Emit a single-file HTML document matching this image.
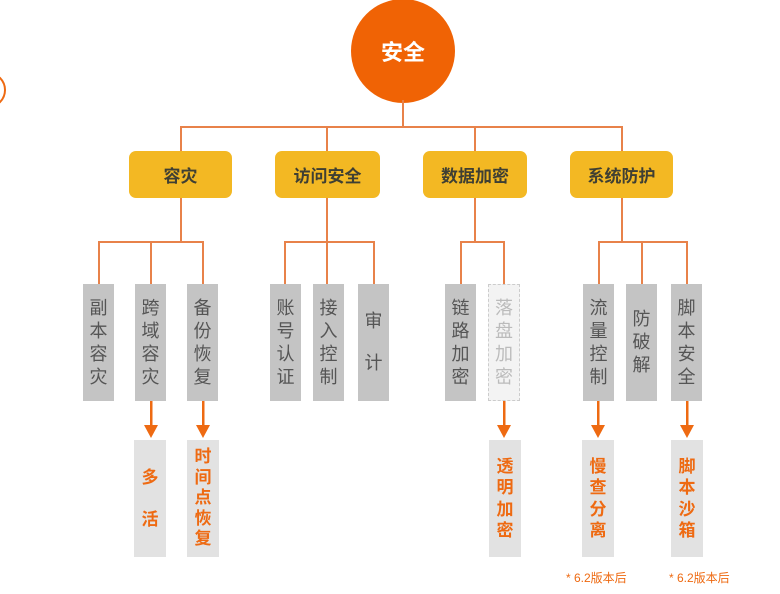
<!DOCTYPE html>
<html><head><meta charset="utf-8">
<style>
body{margin:0;width:780px;height:594px;background:#fff;position:relative;overflow:hidden;font-family:"Liberation Sans","Noto Sans CJK SC",sans-serif}
.a{position:absolute}
.ln{position:absolute;background:#e8824a}
.cat{position:absolute;top:151px;height:47px;background:#f3b823;border-radius:7px;color:#3f3f33;font-weight:bold;font-size:17px;display:flex;align-items:center;justify-content:center}
.g{position:absolute;top:284px;height:117px;background:#c4c4c4;color:#555;font-size:18px;line-height:23px;display:flex;align-items:center;justify-content:center;text-align:center;width:31px}
.o{position:absolute;top:440px;height:117px;background:#e2e2e2;color:#ee6a12;font-weight:bold;font-size:17px;line-height:21.5px;display:flex;align-items:center;justify-content:center;text-align:center;width:32px}
.arr{position:absolute;top:401px;width:14px;height:39px}
.note{position:absolute;top:569px;color:#ee6a12;font-size:12px}
</style></head><body>
<div class="a" style="left:-30px;top:72px;width:32px;height:32px;border:2px solid #ee6a12;border-radius:50%"></div>
<div class="a" style="left:351px;top:-1px;width:104px;height:104px;border-radius:50%;background:#f06305;color:#fff;font-weight:bold;font-size:22px;display:flex;align-items:center;justify-content:center">安全</div>
<div class="ln" style="left:402px;top:100px;width:2px;height:28px"></div>
<div class="ln" style="left:180px;top:126px;width:443px;height:2px"></div>
<div class="ln" style="left:180px;top:126px;width:2px;height:25px"></div>
<div class="ln" style="left:326px;top:126px;width:2px;height:25px"></div>
<div class="ln" style="left:474px;top:126px;width:2px;height:25px"></div>
<div class="ln" style="left:621px;top:126px;width:2px;height:25px"></div>
<div class="cat" style="left:129px;width:103px">容灾</div>
<div class="cat" style="left:275px;width:105px">访问安全</div>
<div class="cat" style="left:423px;width:104px">数据加密</div>
<div class="cat" style="left:570px;width:103px">系统防护</div>
<div class="ln" style="left:180px;top:198px;width:2px;height:43px"></div>
<div class="ln" style="left:98px;top:241px;width:106px;height:2px"></div>
<div class="ln" style="left:98px;top:241px;width:2px;height:43px"></div>
<div class="ln" style="left:150px;top:241px;width:2px;height:43px"></div>
<div class="ln" style="left:202px;top:241px;width:2px;height:43px"></div>
<div class="ln" style="left:326px;top:198px;width:2px;height:86px"></div>
<div class="ln" style="left:284px;top:241px;width:90px;height:2px"></div>
<div class="ln" style="left:284px;top:241px;width:2px;height:43px"></div>
<div class="ln" style="left:373px;top:241px;width:2px;height:43px"></div>
<div class="ln" style="left:474px;top:198px;width:2px;height:43px"></div>
<div class="ln" style="left:460px;top:241px;width:45px;height:2px"></div>
<div class="ln" style="left:460px;top:241px;width:2px;height:43px"></div>
<div class="ln" style="left:503px;top:241px;width:2px;height:43px"></div>
<div class="ln" style="left:621px;top:198px;width:2px;height:43px"></div>
<div class="ln" style="left:598px;top:241px;width:89px;height:2px"></div>
<div class="ln" style="left:598px;top:241px;width:2px;height:43px"></div>
<div class="ln" style="left:641px;top:241px;width:2px;height:43px"></div>
<div class="ln" style="left:686px;top:241px;width:2px;height:43px"></div>
<div class="g" style="left:83px">副<br>本<br>容<br>灾</div>
<div class="g" style="left:135px">跨<br>域<br>容<br>灾</div>
<div class="g" style="left:187px">备<br>份<br>恢<br>复</div>
<div class="g" style="left:270px">账<br>号<br>认<br>证</div>
<div class="g" style="left:313px">接<br>入<br>控<br>制</div>
<div class="g" style="left:358px;line-height:21px">审<br><br>计</div>
<div class="g" style="left:445px">链<br>路<br>加<br>密</div>
<div class="g" style="left:488px;background:#f3f3f3;color:#bbb;border:1px dashed #ccc;box-sizing:border-box;width:32px">落<br>盘<br>加<br>密</div>
<div class="g" style="left:583px">流<br>量<br>控<br>制</div>
<div class="g" style="left:626px">防<br>破<br>解</div>
<div class="g" style="left:671px">脚<br>本<br>安<br>全</div>
<svg class="arr" style="left:144px" viewBox="0 0 14 39"><rect x="6" y="0" width="2.5" height="26" fill="#ee6a12"/><path d="M0 24H14L7 37Z" fill="#ee6a12"/></svg>
<svg class="arr" style="left:196px" viewBox="0 0 14 39"><rect x="6" y="0" width="2.5" height="26" fill="#ee6a12"/><path d="M0 24H14L7 37Z" fill="#ee6a12"/></svg>
<svg class="arr" style="left:497px" viewBox="0 0 14 39"><rect x="6" y="0" width="2.5" height="26" fill="#ee6a12"/><path d="M0 24H14L7 37Z" fill="#ee6a12"/></svg>
<svg class="arr" style="left:591px" viewBox="0 0 14 39"><rect x="6" y="0" width="2.5" height="26" fill="#ee6a12"/><path d="M0 24H14L7 37Z" fill="#ee6a12"/></svg>
<svg class="arr" style="left:680px" viewBox="0 0 14 39"><rect x="6" y="0" width="2.5" height="26" fill="#ee6a12"/><path d="M0 24H14L7 37Z" fill="#ee6a12"/></svg>
<div class="o" style="left:134px;line-height:21px">多<br><br>活</div>
<div class="o" style="left:187px;line-height:20.5px">时<br>间<br>点<br>恢<br>复</div>
<div class="o" style="left:489px">透<br>明<br>加<br>密</div>
<div class="o" style="left:582px">慢<br>查<br>分<br>离</div>
<div class="o" style="left:671px">脚<br>本<br>沙<br>箱</div>
<div class="note" style="left:566px">* 6.2版本后</div>
<div class="note" style="left:669px">* 6.2版本后</div>
</body></html>
